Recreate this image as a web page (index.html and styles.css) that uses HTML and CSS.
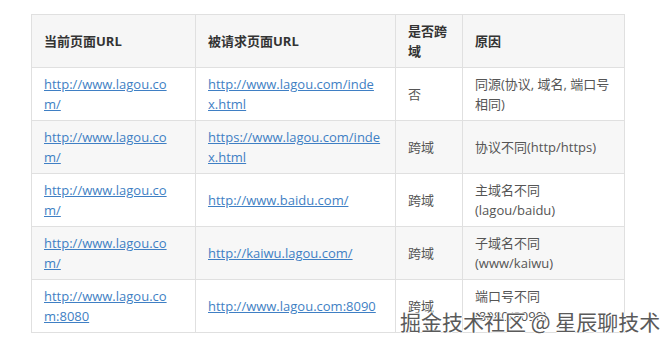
FILE: index.html
```html
<!DOCTYPE html>
<html lang="zh">
<head>
<meta charset="utf-8">
<link rel="stylesheet" href="styles.css">
</head>
<body>
<div class="page">
  <table class="cors">
    <colgroup>
      <col class="c1"><col class="c2"><col class="c3"><col class="c4">
    </colgroup>
    <thead>
      <tr><th>当前页面URL</th><th>被请求页面URL</th><th>是否跨域</th><th>原因</th></tr>
    </thead>
    <tbody>
      <tr>
        <td class="url1"><a href="#">http://www.lagou.com/</a></td>
        <td><a href="#">http://www.lagou.com/index.html</a></td>
        <td>否</td>
        <td class="why">同源(协议, 域名, 端口号相同)</td>
      </tr>
      <tr>
        <td class="url1"><a href="#">http://www.lagou.com/</a></td>
        <td><a href="#">https://www.lagou.com/index.html</a></td>
        <td>跨域</td>
        <td class="why">协议不同(http/https)</td>
      </tr>
      <tr>
        <td class="url1"><a href="#">http://www.lagou.com/</a></td>
        <td><a href="#">http://www.baidu.com/</a></td>
        <td>跨域</td>
        <td class="why">主域名不同(lagou/baidu)</td>
      </tr>
      <tr>
        <td class="url1"><a href="#">http://www.lagou.com/</a></td>
        <td><a href="#">http://kaiwu.lagou.com/</a></td>
        <td>跨域</td>
        <td class="why">子域名不同(www/kaiwu)</td>
      </tr>
      <tr>
        <td class="url1"><a href="#">http://www.lagou.com:8080</a></td>
        <td><a href="#">http://www.lagou.com:8090</a></td>
        <td>跨域</td>
        <td class="why">端口号不同(8080/8090)</td>
      </tr>
    </tbody>
  </table>
  <div class="watermark">掘金技术社区 @ 星辰聊技术</div>
</div>
</body>
</html>
```
FILE: styles.css
```css
html, body {
  margin: 0;
  padding: 0;
  background: #fff;
}
.page {
  position: relative;
  width: 671px;
  height: 343px;
  padding: 14px 0 0 31px;
  box-sizing: border-box;
  font-family: "Open Sans", "Noto Sans CJK SC", sans-serif;
  font-size: 13px;
  line-height: 20px;
  color: #555;
}
.cors {
  border-collapse: collapse;
  table-layout: fixed;
  width: 593px;
}
.c1 { width: 164px; }
.c2 { width: 200px; }
.c3 { width: 67px; }
.c4 { width: 162px; }
.cors th, .cors td {
  border: 1px solid #e0e0e0;
  padding: 6px 12px;
  text-align: left;
  vertical-align: middle;
}
.cors td.url1 {
  padding-right: 18px;
}
.cors td.why {
  padding-right: 13px;
}
.cors th {
  background: #f6f6f6;
  color: #333;
  font-weight: 700;
  height: 40px;
}
.cors td {
  height: 40px;
}
.cors tbody tr:nth-child(even) td {
  background: #f7f7f7;
}
.cors a {
  color: #3f7fc4;
  text-decoration: underline;
  word-break: break-all;
}
.watermark {
  position: absolute;
  left: 400px;
  top: 307px;
  font-family: "Noto Sans CJK SC", sans-serif;
  font-size: 21px;
  line-height: 28px;
  color: #5a5a5a;
  letter-spacing: 0;
  white-space: nowrap;
  text-shadow: 1px 0 0 #fff, -1px 0 0 #fff, 0 1px 0 #fff, 0 -1px 0 #fff;
}
```
